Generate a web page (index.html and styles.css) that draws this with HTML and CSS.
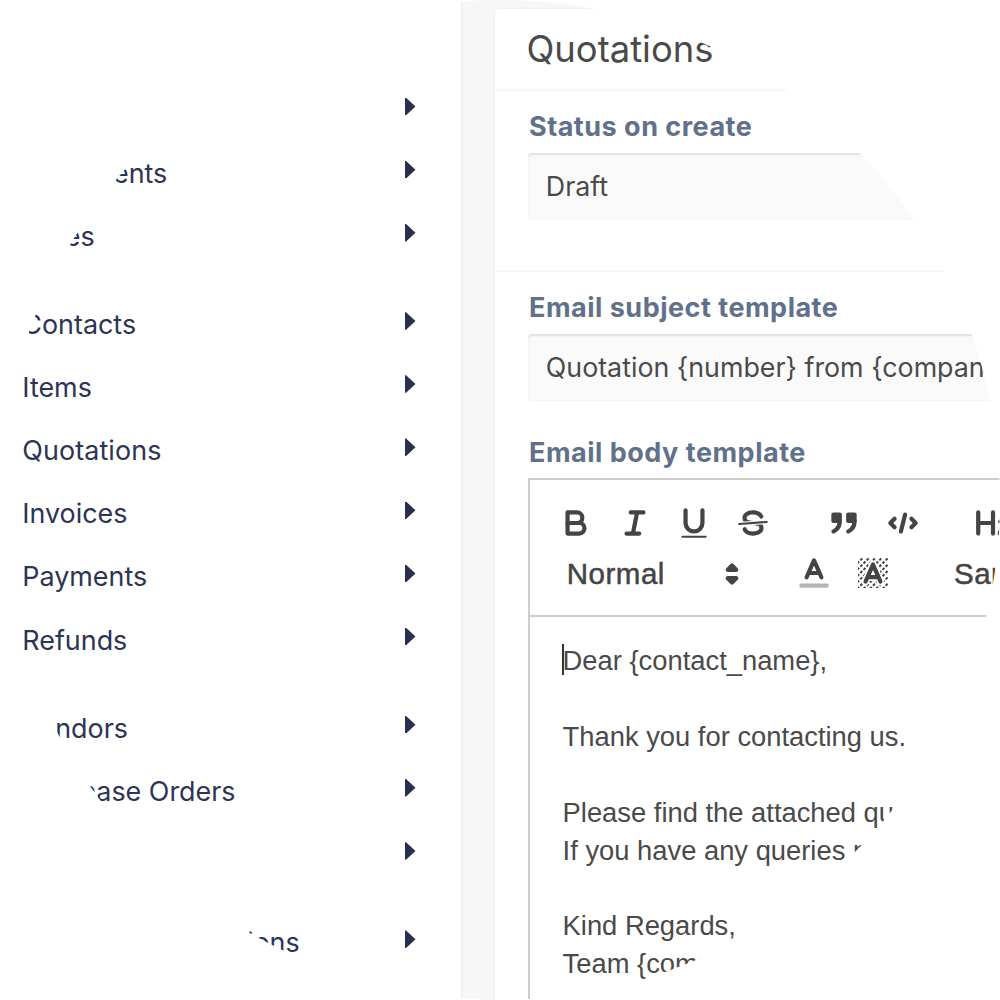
FILE: index.html
```
<!DOCTYPE html>
<html lang="en">
<head>
<meta charset="utf-8">
<title>Quotations settings</title>
<link rel="stylesheet" href="styles.css">
</head>
<body>
<div class="app">
  <nav class="sidebar">
    <div class="group">
      <a class="item"><span></span><i class="caret"></i></a>
      <a class="item"><span class="tail tail-a">ents</span><i class="caret"></i></a>
      <a class="item"><span class="tail tail-b">es</span><i class="caret"></i></a>
    </div>
    <div class="group">
      <a class="item"><span>Contacts</span><i class="caret"></i></a>
      <a class="item"><span>Items</span><i class="caret"></i></a>
      <a class="item"><span class="wide">Quotations</span><i class="caret"></i></a>
      <a class="item"><span>Invoices</span><i class="caret"></i></a>
      <a class="item"><span>Payments</span><i class="caret"></i></a>
      <a class="item"><span>Refunds</span><i class="caret"></i></a>
    </div>
    <div class="group">
      <a class="item"><span>Vendors</span><i class="caret"></i></a>
      <a class="item"><span>Purchase Orders</span><i class="caret"></i></a>
      <a class="item"><span></span><i class="caret"></i></a>
    </div>
    <div class="group">
      <a class="item"><span class="tail tail-c">ions</span><i class="caret"></i></a>
    </div>
  </nav>
  <main class="content">
    <section class="card">
      <header class="card-head"><h1>Quotations</h1></header>
      <div class="section section-status">
        <label class="label">Status on create</label>
        <div class="input">Draft</div>
      </div>
      <div class="section section-email">
        <label class="label">Email subject template</label>
        <div class="input input-subject">Quotation {number} from {company</div>
        <label class="label">Email body template</label>
        <div class="editor">
          <div class="toolbar">
            <div class="tools">
              <div class="formats">
                <svg class="icon" viewBox="0 0 18 18"><path d="M5,4H9.5A2.5,2.5,0,0,1,12,6.5v0A2.5,2.5,0,0,1,9.5,9H5A0,0,0,0,1,5,9V4A0,0,0,0,1,5,4Z"/><path d="M5,9h5.5A2.5,2.5,0,0,1,13,11.5v0A2.5,2.5,0,0,1,10.5,14H5a0,0,0,0,1,0,0V9A0,0,0,0,1,5,9Z"/></svg>
                <svg class="icon" viewBox="0 0 18 18"><path d="M7 4H13M5 14H11M8 14L10 4"/></svg>
                <svg class="icon" viewBox="0 0 18 18"><path d="M5,3V9a4,4,0,0,0,8,0V3"/><rect class="fill" height="1" rx=".5" width="12" x="3" y="15"/></svg>
                <svg class="icon" viewBox="0 0 18 18"><path class="thin" d="M15.5 8.5L2.5 9.5"/><path class="fill" d="M9.007,8C6.542,7.791,6,7.519,6,6.5,6,5.792,7.283,5,9,5c1.571,0,2.765.679,2.969,1.309a1,1,0,0,0,1.9-.617C13.356,4.106,11.354,3,9,3,6.2,3,4,4.538,4,6.5a3.2,3.2,0,0,0,.5,1.843Z"/><path class="fill" d="M8.984,10C11.457,10.208,12,10.479,12,11.5c0,0.708-1.283,1.5-3,1.5-1.571,0-2.765-.679-2.969-1.309a1,1,0,1,0-1.9.617C4.644,13.894,6.646,15,9,15c2.8,0,5-1.538,5-3.5a3.2,3.2,0,0,0-.5-1.843Z"/></svg>
              </div>
              <div class="formats">
                <svg class="icon" viewBox="0 0 18 18"><rect class="both" height="3" width="3" x="4" y="5"/><rect class="both" height="3" width="3" x="11" y="5"/><path class="both" d="M7,8c0,4.031-3,5-3,5"/><path class="both" d="M14,8c0,4.031-3,5-3,5"/></svg>
                <svg class="icon" viewBox="0 0 18 18"><path d="M5 7L3 9L5 11M13 7L15 9L13 11M10 5L8 13"/></svg>
              </div>
              <div class="formats">
                <svg class="icon" viewBox="0 0 18 18"><path d="M2 4V14M9 4V14M2 9H9"/><path class="fill" d="M16.74,13.81v.44a.54.54,0,0,1-.6.6H11.86a.58.58,0,0,1-.65-.6V14c0-2.9,3.4-3.42,3.4-4.55a.78.78,0,0,0-.85-.78,1.18,1.18,0,0,0-.84.38c-.27.26-.56.37-.86.13l-.43-.34c-.3-.24-.38-.52-.15-.81a2.97,2.97,0,0,1,2.45-1.18,2.45,2.45,0,0,1,2.68,2.41c0,2.45-3.18,2.93-3.28,3.94h2.8A.54.54,0,0,1,16.74,13.81Z"/></svg>
              </div>
            </div>
            <div class="tools">
              <div class="formats">
                <div class="picker">Normal
                  <svg class="icon updown" viewBox="0 0 18 18"><path class="both" d="M7 11L9 13L11 11Z"/><path class="both" d="M7 7L9 5L11 7Z"/></svg>
                </div>
              </div>
              <div class="formats">
                <svg class="icon" viewBox="0 0 18 18"><path class="faded" d="M3 15H15"/><path d="M5.5 11L9 3L12.5 11M11.63 9H6.38"/></svg>
                <svg class="icon" viewBox="0 0 18 18"><clipPath id="frame"><rect x="1.9" y="1.9" width="14.2" height="14.2"/></clipPath><path class="hatch" clip-path="url(#frame)" d="M0 6L6 0M0 9L9 0M0 12L12 0M0 15L15 0M0 18L18 0M3 18L18 3M6 18L18 6M9 18L18 9M12 18L18 12"/><path class="halo" d="M5.5 13L9 5L12.5 13M11.63 11H6.38"/><path d="M5.5 13L9 5L12.5 13M11.63 11H6.38"/></svg>
              </div>
              <div class="formats">
                <div class="picker">Sar</div>
              </div>
            </div>
          </div>
          <div class="text">
            <p class="first">Dear {contact_name},</p>
            <p><br></p>
            <p>Thank you for contacting us.</p>
            <p><br></p>
            <p>Please find the attached qu</p>
            <p>If you have any queries p</p>
            <p><br></p>
            <p>Kind Regards,</p>
            <p>Team {comp</p>
          </div>
        </div>
      </div>
    </section>
  </main>
</div>
</body>
</html>
```
FILE: styles.css
```
* { box-sizing: border-box; }

body {
  margin: 0;
  background: #fff;
  font-family: Inter, sans-serif;
  color: #4a4a4a;
}

.app {
  display: flex;
  width: 1000px;
  height: 1000px;
  overflow: hidden;
  clip-path: circle(500px at 500px 500px);
}

/* Navigation */
.sidebar {
  flex: 0 0 461px;
  padding: 78px 45.5px 0 22.3px;
  background: #fff;
}

.group { margin-bottom: 25.1px; }

.item {
  display: flex;
  align-items: center;
  justify-content: space-between;
  height: 63.12px;
  font-size: 26.9px;
  color: #2d3454;
}

.wide { letter-spacing: .1px; }
.tail { text-align: right; }
.tail-a { width: 145px; }
.tail-b { width: 72.3px; }
.tail-c { width: 277.3px; }

.caret {
  width: 10.5px;
  height: 17.5px;
  margin-bottom: 6px;
  background: #28304e;
  clip-path: polygon(0 0, 10% 0, 100% 50%, 10% 100%, 0 100%);
}

/* Settings card */
.content {
  flex: 0 0 700px;
  padding: 9px 0 0 33.5px;
  background: #f7f7f7;
  box-shadow: inset 2px 0 1px #f2f2f2;
}

.card {
  height: 1100px;
  background: #fff;
  border-radius: 4px;
  box-shadow: 0 0 3px rgba(0, 0, 0, .08);
}

.card-head {
  display: flex;
  align-items: center;
  height: 82px;
  padding: 0 0 0 32px;
  border-bottom: 2px solid #f6f6f6;
}

h1 {
  margin: 0;
  font-size: 36.4px;
  font-weight: 400;
}

.section { padding-left: 33.5px; }
.section-status { height: 181px; padding-top: 16px; border-bottom: 2px solid #f6f6f6; }
.section-email { padding-top: 16px; }

.label {
  display: block;
  margin-bottom: 5.5px;
  padding-left: 1px;
  font-size: 27px;
  font-weight: 700;
  line-height: 40px;
  letter-spacing: .5px;
  color: #61718a;
}

.input {
  height: 67px;
  padding: 0 0 1px 17.8px;
  font-size: 26.8px;
  line-height: 66px;
  white-space: nowrap;
  background: #fafafa;
  border-radius: 4px;
  box-shadow: inset 0 3px 2px -1px #e2e2e2, inset 0 0 0 1.5px #f6f6f6;
}

.input-subject { margin-bottom: 32.4px; }

/* Rich text editor */
.editor {
  height: 600px;
  border: 2px solid #ccc;
  font-family: "Liberation Sans", sans-serif;
}

.toolbar {
  height: 137px;
  padding: 17.3px 16.8px 0;
  border-bottom: 2px solid #ccc;
  overflow: hidden;
}

.tools { display: flex; height: 50.5px; width: 700px; }
.formats { display: flex; align-items: center; margin-right: 31.6px; }

.icon {
  width: 38px;
  height: 38px;
  margin: 0 10.5px;
  fill: none;
  stroke: #444;
  stroke-width: 2;
  stroke-linecap: round;
  stroke-linejoin: round;
}

.icon .fill { fill: #444; stroke: none; }
.icon .both { fill: #444; }
.icon .thin { stroke-width: 1; }
.icon .faded { opacity: .4; }
.icon .hatch { stroke-width: .95; stroke-linecap: butt; stroke-dasharray: 1.3 .82; }
.icon .halo { stroke: #fff; stroke-width: 3.6; }

.picker {
  display: flex;
  align-items: center;
  justify-content: space-between;
  width: 206px;
  padding: 1px 0 0 20px;
  font-size: 29.5px;
  letter-spacing: .5px;
  color: #444;
  -webkit-text-stroke: .5px #444;
}

.updown { margin: 0 2px 0 0; }

.text {
  padding: 24.9px 0 0 32.6px;
  font-size: 27.35px;
  line-height: 37.87px;
}

.text p { margin: 0; white-space: nowrap; }

/* text cursor at the start of the message */
.first { position: relative; }
.first::before {
  content: "";
  position: absolute;
  left: -.6px;
  top: 2px;
  width: 1.5px;
  height: 31px;
  background: #333;
}
```
